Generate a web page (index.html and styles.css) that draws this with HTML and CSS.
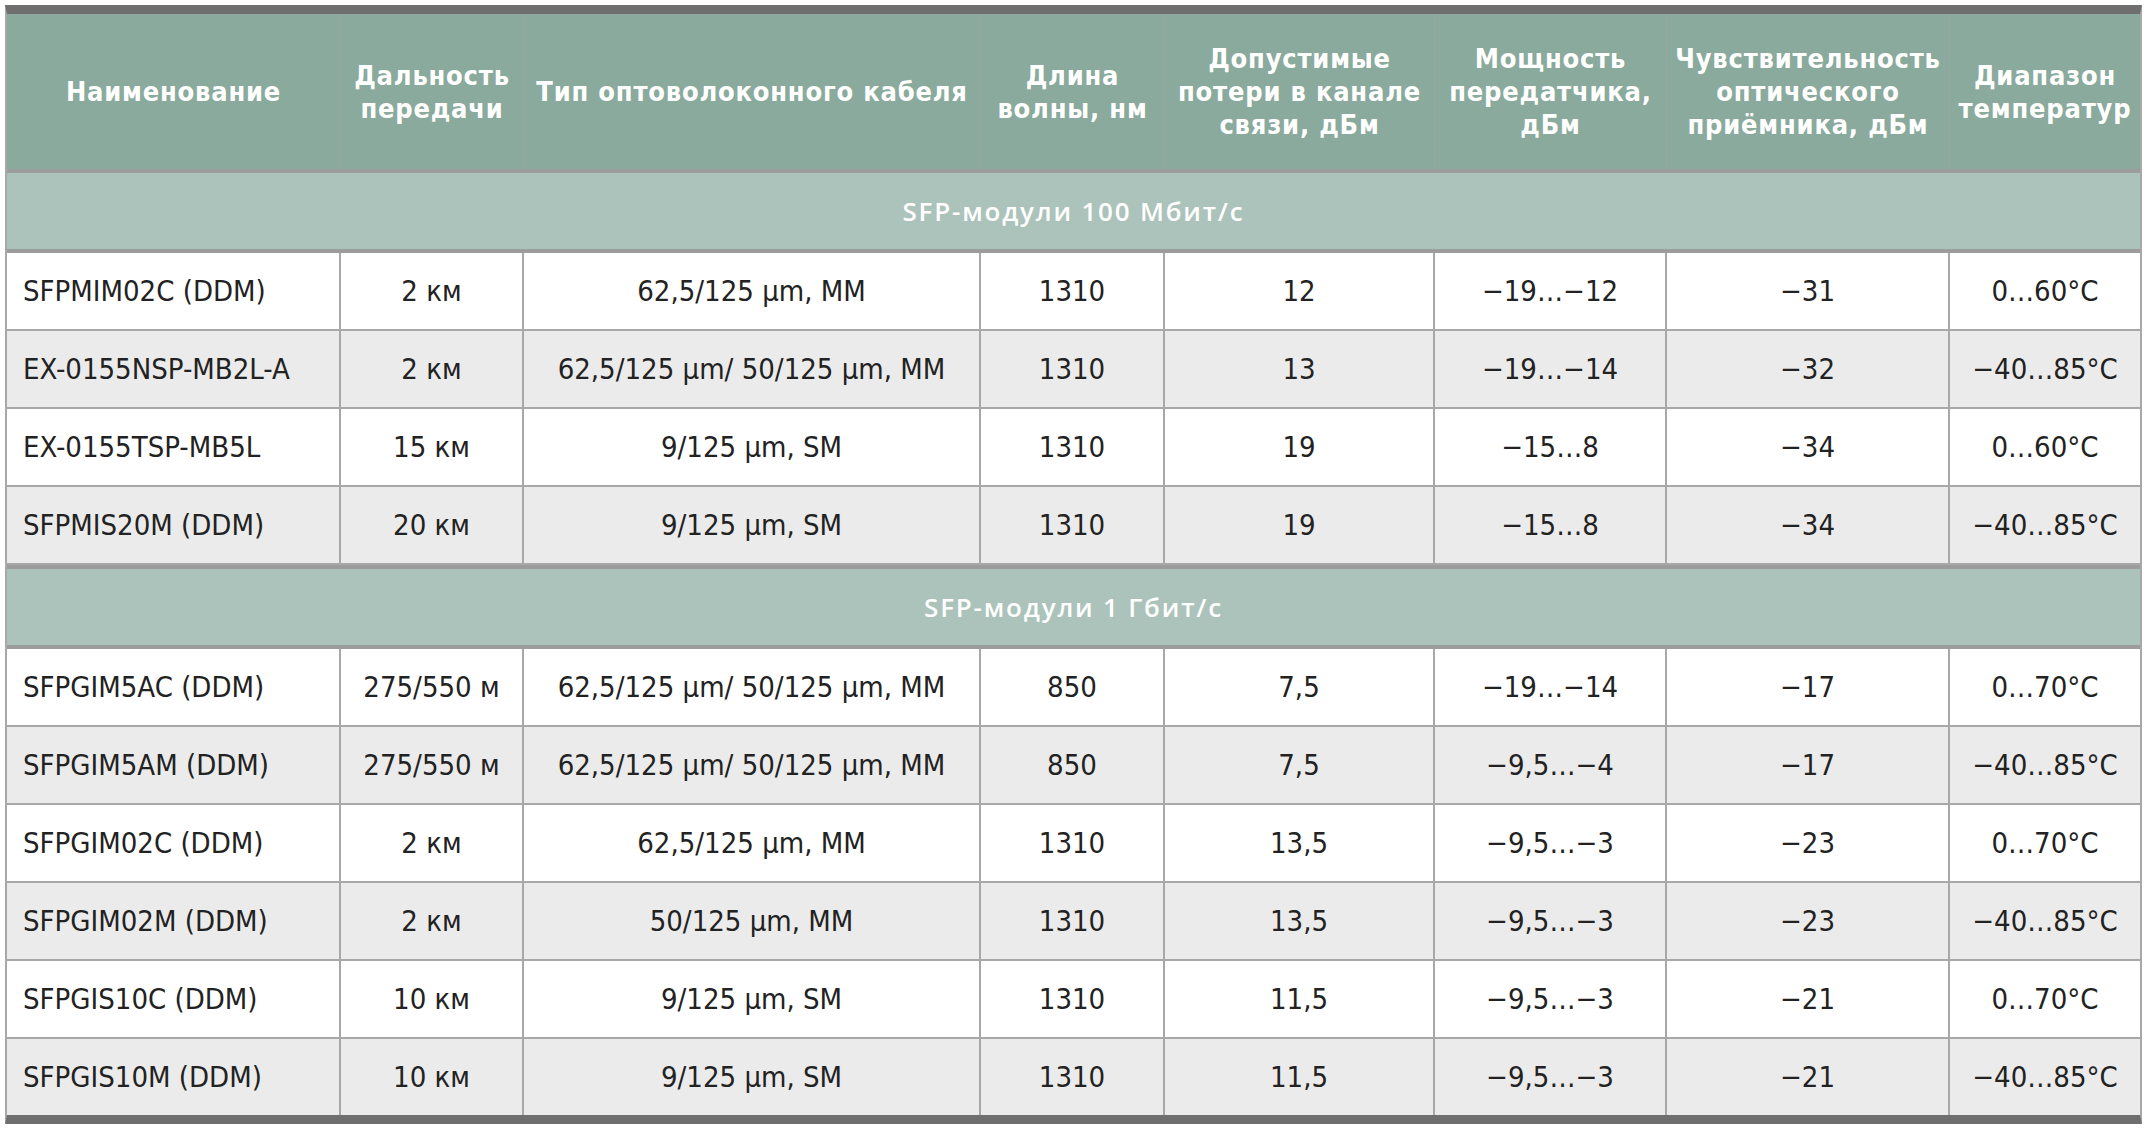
FILE: index.html
```html
<!DOCTYPE html>
<html lang="ru">
<head>
<meta charset="utf-8">
<title>SFP-модули</title>
<link rel="stylesheet" href="styles.css">
</head>
<body>
<div class="sheet">
<table class="spec">
  <colgroup>
    <col class="c1"><col class="c2"><col class="c3"><col class="c4">
    <col class="c5"><col class="c6"><col class="c7"><col class="c8">
  </colgroup>
  <thead>
    <tr>
      <th>Наименование</th>
      <th>Дальность<br>передачи</th>
      <th>Тип оптоволоконного кабеля</th>
      <th>Длина<br>волны, нм</th>
      <th>Допустимые<br>потери в канале<br>связи, дБм</th>
      <th>Мощность<br>передатчика,<br>дБм</th>
      <th>Чувствительность<br>оптического<br>приёмника, дБм</th>
      <th>Диапазон<br>температур</th>
    </tr>
  </thead>
  <tbody>
    <tr class="group"><td colspan="8">SFP-модули 100 Мбит/с</td></tr>
    <tr><td>SFPMIM02C (DDM)</td><td>2 км</td><td>62,5/125 µm, MM</td><td>1310</td><td>12</td><td>−19…−12</td><td>−31</td><td>0…60°C</td></tr>
    <tr class="alt"><td>EX-0155NSP-MB2L-A</td><td>2 км</td><td>62,5/125 µm/ 50/125 µm, MM</td><td>1310</td><td>13</td><td>−19…−14</td><td>−32</td><td>−40…85°C</td></tr>
    <tr><td>EX-0155TSP-MB5L</td><td>15 км</td><td>9/125 µm, SM</td><td>1310</td><td>19</td><td>−15…8</td><td>−34</td><td>0…60°C</td></tr>
    <tr class="alt"><td>SFPMIS20M (DDM)</td><td>20 км</td><td>9/125 µm, SM</td><td>1310</td><td>19</td><td>−15…8</td><td>−34</td><td>−40…85°C</td></tr>
    <tr class="group"><td colspan="8">SFP-модули 1 Гбит/с</td></tr>
    <tr><td>SFPGIM5AC (DDM)</td><td>275/550 м</td><td>62,5/125 µm/ 50/125 µm, MM</td><td>850</td><td>7,5</td><td>−19…−14</td><td>−17</td><td>0…70°C</td></tr>
    <tr class="alt"><td>SFPGIM5AM (DDM)</td><td>275/550 м</td><td>62,5/125 µm/ 50/125 µm, MM</td><td>850</td><td>7,5</td><td>−9,5…−4</td><td>−17</td><td>−40…85°C</td></tr>
    <tr><td>SFPGIM02C (DDM)</td><td>2 км</td><td>62,5/125 µm, MM</td><td>1310</td><td>13,5</td><td>−9,5…−3</td><td>−23</td><td>0…70°C</td></tr>
    <tr class="alt"><td>SFPGIM02M (DDM)</td><td>2 км</td><td>50/125 µm, MM</td><td>1310</td><td>13,5</td><td>−9,5…−3</td><td>−23</td><td>−40…85°C</td></tr>
    <tr><td>SFPGIS10C (DDM)</td><td>10 км</td><td>9/125 µm, SM</td><td>1310</td><td>11,5</td><td>−9,5…−3</td><td>−21</td><td>0…70°C</td></tr>
    <tr class="alt"><td>SFPGIS10M (DDM)</td><td>10 км</td><td>9/125 µm, SM</td><td>1310</td><td>11,5</td><td>−9,5…−3</td><td>−21</td><td>−40…85°C</td></tr>
  </tbody>
</table>
</div>
</body>
</html>
```
FILE: styles.css
```css
html, body {
  margin: 0;
  padding: 0;
  background: #ffffff;
}

.sheet {
  padding: 5px 0 0 5px;
}

.spec {
  width: 2137px;
  table-layout: fixed;
  border-collapse: separate;
  border-spacing: 0;
  border-top: 9px solid #6f6f6f;
  border-bottom: 9px solid #6f6f6f;
  border-left: 2px solid #a8a8a8;
  border-right: 2px solid #a8a8a8;
  font-family: "DejaVu Sans Condensed", "Liberation Sans Narrow", "Liberation Sans", sans-serif;
  color: #222222;
}

.c1 { width: 334px; }
.c2 { width: 183px; }
.c3 { width: 457px; }
.c4 { width: 184px; }
.c5 { width: 270px; }
.c6 { width: 232px; }
.c7 { width: 283px; }
.c8 { width: 190px; }

.spec th {
  height: 155px;
  padding: 0;
  background: #89aa9c;
  color: #ffffff;
  font-weight: 700;
  font-size: 27px;
  line-height: 33px;
  letter-spacing: 0.8px;
  text-align: center;
  vertical-align: middle;
  white-space: nowrap;
  border-right: 1px solid #9aa5a0;
}

.spec th:last-child {
  border-right: none;
}

.spec td {
  height: 76px;
  padding: 0;
  background: #ffffff;
  font-size: 29px;
  letter-spacing: 0;
  text-align: center;
  vertical-align: middle;
  white-space: nowrap;
  border-right: 2px solid #a8a8a8;
  border-bottom: 2px solid #a8a8a8;
}

.spec td:first-child {
  text-align: left;
  padding-left: 16px;
}

.spec td:last-child {
  border-right: none;
}

.spec tr.alt td {
  background: #ebebeb;
}

.spec tbody tr:last-child td {
  border-bottom: none;
}

.spec tr.group td {
  height: 76px;
  padding: 0;
  background: #abc3ba;
  color: #ffffff;
  font-family: "Open Sans", "Liberation Sans", sans-serif;
  font-weight: 600;
  font-size: 26px;
  letter-spacing: 1.8px;
  text-align: center;
  vertical-align: middle;
  border-top: 4px solid #9c9c9c;
  border-bottom: 4px solid #9c9c9c;
  border-right: none;
}
```
